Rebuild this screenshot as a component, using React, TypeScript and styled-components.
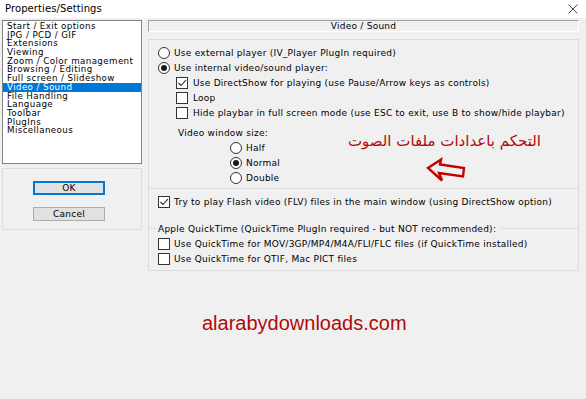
import * as React from 'react';
import styled, { createGlobalStyle } from 'styled-components';

const GlobalStyle = createGlobalStyle`
  html, body {
    margin: 0;
    padding: 0;
    background: #f0f0f0;
  }
  body {
    width: 586px;
    height: 399px;
    overflow: hidden;
    font-family: 'DejaVu Sans', 'Liberation Sans', sans-serif;
    font-size: 9px;
    letter-spacing: 0.25px;
    color: #000;
  }
`;

const TitleBar = styled.div`
  height: 18px;
  background: #fff;
  display: flex;
  align-items: center;
  justify-content: space-between;
  padding: 0 8px 1px 5px;
  box-sizing: border-box;
  font-size: 10px;
  letter-spacing: 0.1px;
`;

const Body = styled.div`
  display: flex;
  padding-top: 2px;
`;

const LeftColumn = styled.div`
  width: 140px;
  margin-left: 2px;
  display: flex;
  flex-direction: column;
  gap: 4px;
`;

const ListBox = styled.div`
  height: 144px;
  border: 1px solid #828282;
  background: #fff;
  box-sizing: border-box;
  padding-top: 1px;
`;

const ListItem = styled.div<{ $selected?: boolean }>`
  height: 8.7px;
  line-height: 8.7px;
  font-size: 8.7px;
  letter-spacing: 0.4px;
  padding-left: 4px;
  white-space: nowrap;
  background: ${(p) => (p.$selected ? '#0078d7' : 'transparent')};
  color: ${(p) => (p.$selected ? '#fff' : '#000')};
`;

const ButtonGroup = styled.div`
  height: 62px;
  border: 1px solid #dcdcdc;
  box-sizing: border-box;
  display: flex;
  flex-direction: column;
  gap: 12px;
  padding: 12px 0 0 30px;
`;

const Button = styled.div<{ $default?: boolean }>`
  width: 72px;
  height: 14px;
  box-sizing: border-box;
  background: #e1e1e1;
  border: 1px solid ${(p) => (p.$default ? '#0078d7' : '#adadad')};
  box-shadow: ${(p) => (p.$default ? 'inset 0 0 0 1px #0078d7' : 'none')};
  display: flex;
  align-items: center;
  justify-content: center;
`;

const RightColumn = styled.div`
  width: 431px;
  margin-left: 6px;
  display: flex;
  flex-direction: column;
`;

const PageHeader = styled.div`
  height: 12px;
  box-sizing: border-box;
  border-top: 1px solid #a0a0a0;
  border-left: 1px solid #a0a0a0;
  border-bottom: 1px solid #fff;
  border-right: 1px solid #fff;
  display: flex;
  align-items: center;
  justify-content: center;
  margin-bottom: 7px;
`;

const VideoBox = styled.div`
  position: relative;
  height: 150px;
  box-sizing: border-box;
  border: 1px solid #dcdcdc;
  padding-top: 5px;
  display: flex;
  flex-direction: column;
`;

const FlashBox = styled.div`
  height: 82px;
  box-sizing: border-box;
  border: 1px solid #dcdcdc;
  border-top: none;
  padding-top: 5px;
  display: flex;
  flex-direction: column;
`;

const Row = styled.div<{ $indent: number; $gap?: number }>`
  height: 15px;
  display: flex;
  align-items: center;
  gap: ${(p) => p.$gap ?? 4}px;
  padding-left: ${(p) => p.$indent}px;
  white-space: nowrap;
`;

const Spacer = styled.div<{ $h: number }>`
  height: ${(p) => p.$h}px;
  flex: none;
`;

const Radio = styled.span<{ $on?: boolean }>`
  width: 12px;
  height: 12px;
  box-sizing: border-box;
  border-radius: 50%;
  border: 1px solid #333;
  background: #fff;
  display: flex;
  align-items: center;
  justify-content: center;
  flex: none;
  &::after {
    content: '';
    width: 6px;
    height: 6px;
    border-radius: 50%;
    background: ${(p) => (p.$on ? '#1a1a1a' : 'transparent')};
  }
`;

const Box = styled.span`
  width: 12px;
  height: 12px;
  box-sizing: border-box;
  border: 1px solid #333;
  background: #fff;
  flex: none;
  display: flex;
`;

const GroupTitle = styled.div`
  height: 15px;
  display: flex;
  align-items: center;
  gap: 2px;
  white-space: nowrap;
  &::before {
    content: '';
    width: 7px;
    height: 1px;
    background: #dcdcdc;
    flex: none;
  }
  &::after {
    content: '';
    flex: 1;
    height: 1px;
    background: #dcdcdc;
    margin-left: 3px;
  }
`;

const ArabicNote = styled.div`
  position: absolute;
  right: 37px;
  top: 91px;
  direction: rtl;
  font-family: 'DejaVu Sans', 'Noto Sans', sans-serif;
  font-size: 15px;
  line-height: 20px;
  letter-spacing: 0;
  color: #b00a0a;
`;

const ArrowMark = styled.svg`
  position: absolute;
  left: 277px;
  top: 117px;
`;

const Watermark = styled.div`
  margin-top: 40px;
  padding-left: 54px;
  font-family: 'Liberation Sans', Arial, sans-serif;
  font-size: 20px;
  line-height: 24px;
  letter-spacing: 0;
  color: #b00a0a;
`;

const Check = () => (
  <svg width="10" height="10" viewBox="0 0 10 10">
    <polyline points="1.5,5 4,7.5 9,2" fill="none" stroke="#222" strokeWidth="1.1" />
  </svg>
);

const CheckBox = ({ on }: { on?: boolean }) => <Box>{on && <Check />}</Box>;

const pages = [
  'Start / Exit options',
  'JPG / PCD / GIF',
  'Extensions',
  'Viewing',
  'Zoom / Color management',
  'Browsing / Editing',
  'Full screen / Slideshow',
  'Video / Sound',
  'File Handling',
  'Language',
  'Toolbar',
  'PlugIns',
  'Miscellaneous',
];

export default function App() {
  return (
    <>
      <GlobalStyle />
      <TitleBar>
        <span>Properties/Settings</span>
        <svg width="10" height="10" viewBox="0 0 10 10">
          <path d="M0.5 0.5 L9.5 9.5 M9.5 0.5 L0.5 9.5" stroke="#333" strokeWidth="0.9" />
        </svg>
      </TitleBar>
      <Body>
        <LeftColumn>
          <ListBox>
            {pages.map((p) => (
              <ListItem key={p} $selected={p === 'Video / Sound'}>
                {p}
              </ListItem>
            ))}
          </ListBox>
          <ButtonGroup>
            <Button $default>OK</Button>
            <Button>Cancel</Button>
          </ButtonGroup>
        </LeftColumn>
        <RightColumn>
          <PageHeader>Video / Sound</PageHeader>
          <VideoBox>
            <Row $indent={9}>
              <Radio />
              Use external player (IV_Player PlugIn required)
            </Row>
            <Row $indent={9}>
              <Radio $on />
              Use internal video/sound player:
            </Row>
            <Row $indent={27} $gap={5}>
              <CheckBox on />
              Use DirectShow for playing (use Pause/Arrow keys as controls)
            </Row>
            <Row $indent={27} $gap={5}>
              <CheckBox />
              Loop
            </Row>
            <Row $indent={27} $gap={5}>
              <CheckBox />
              Hide playbar in full screen mode (use ESC to exit, use B to show/hide playbar)
            </Row>
            <Spacer $h={5} />
            <Row $indent={29}>Video window size:</Row>
            <Row $indent={81}>
              <Radio />
              Half
            </Row>
            <Row $indent={81}>
              <Radio $on />
              Normal
            </Row>
            <Row $indent={81}>
              <Radio />
              Double
            </Row>
            <ArabicNote>التحكم باعدادات ملفات الصوت</ArabicNote>
            <ArrowMark width="42" height="26" viewBox="0 0 42 26">
              <polygon
                points="2,11 15,2.5 14,7.5 38,11 37,19.5 13,16 16,23.5"
                fill="none"
                stroke="#c40000"
                strokeWidth="2.4"
                strokeLinejoin="miter"
              />
            </ArrowMark>
          </VideoBox>
          <FlashBox>
            <Row $indent={9}>
              <CheckBox on />
              Try to play Flash video (FLV) files in the main window (using DirectShow option)
            </Row>
            <Spacer $h={12} />
            <GroupTitle>
              Apple QuickTime (QuickTime PlugIn required - but NOT recommended):
            </GroupTitle>
            <Row $indent={9}>
              <CheckBox />
              Use QuickTime for MOV/3GP/MP4/M4A/FLI/FLC files (if QuickTime installed)
            </Row>
            <Row $indent={9}>
              <CheckBox />
              Use QuickTime for QTIF, Mac PICT files
            </Row>
          </FlashBox>
          <Watermark>alarabydownloads.com</Watermark>
        </RightColumn>
      </Body>
    </>
  );
}
